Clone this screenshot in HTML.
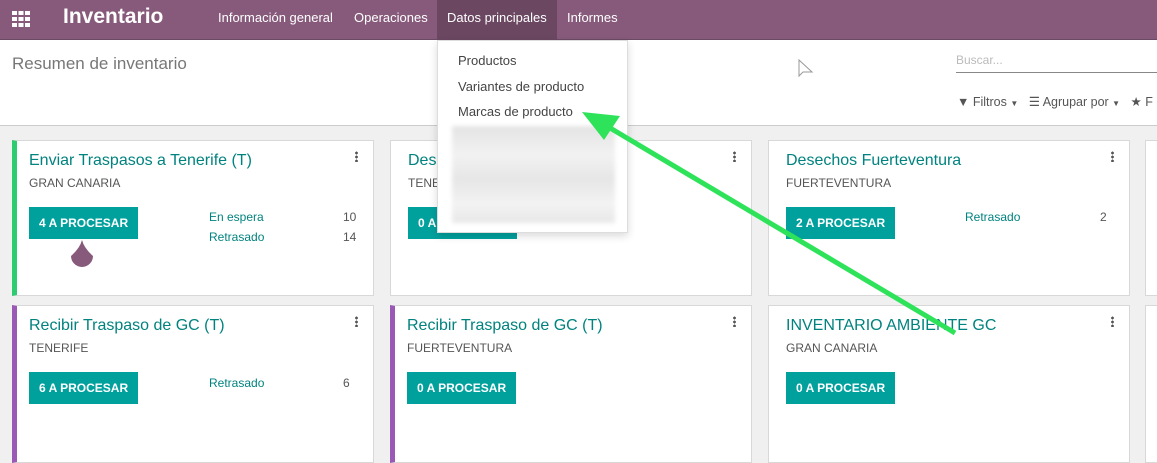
<!DOCTYPE html>
<html><head><meta charset="utf-8"><style>
*{box-sizing:border-box;margin:0;padding:0}
body{width:1157px;height:463px;overflow:hidden;background:#f0f0f0;font-family:"Liberation Sans",sans-serif;position:relative;font-size:13px;color:#4c4c4c}
.nav{position:absolute;left:0;top:0;width:1157px;height:40px;background:#875a7b;color:#fff;border-bottom:1px solid #6b4a63}
.nav span{position:absolute;top:10px;font-size:13px}
.cp{position:absolute;left:0;top:40px;width:1157px;height:86px;background:#fff;border-bottom:1px solid #ccc}
.card{position:absolute;background:#fff;border:1px solid #d8d8d8}
.card .t{position:absolute;left:17px;top:11px;font-size:16px;color:#00837f;white-space:nowrap}
.card .s{position:absolute;left:17px;top:35px;font-size:12px;color:#555}
.card .b{position:absolute;left:17px;top:66px;height:32px;background:#00a09d;color:#fff;font-weight:bold;font-size:12px;padding:9px 10px;white-space:nowrap}
.card .d{position:absolute;right:15px;top:10px;width:3px;height:11px;background:radial-gradient(circle,#555 1.3px,transparent 1.5px) 0 0/3px 4px}
.lbl{position:absolute;font-size:12px;color:#00837f}
.num{position:absolute;font-size:12px;color:#555}
</style></head><body>
<div class="nav">
<svg style="position:absolute;left:12px;top:11px" width="18" height="16" viewBox="0 0 18 16"><g fill="#fff"><rect x="0" y="0" width="5" height="4"/><rect x="6.5" y="0" width="5" height="4"/><rect x="13" y="0" width="5" height="4"/><rect x="0" y="6" width="5" height="4"/><rect x="6.5" y="6" width="5" height="4"/><rect x="13" y="6" width="5" height="4"/><rect x="0" y="12" width="5" height="4"/><rect x="6.5" y="12" width="5" height="4"/><rect x="13" y="12" width="5" height="4"/></g></svg>
<span style="left:63px;top:5px;font-size:21px;font-weight:bold">Inventario</span>
<span style="left:218px">Información general</span>
<span style="left:354px">Operaciones</span>
<div style="position:absolute;left:437px;top:0;width:120px;height:40px;background:#6b4762"></div>
<span style="left:447px">Datos principales</span>
<span style="left:567px">Informes</span>
</div>
<div class="cp">
<div style="position:absolute;left:12px;top:14px;font-size:17px;color:#777">Resumen de inventario</div>
<div style="position:absolute;left:956px;top:13px;font-size:12px;color:#bbb">Buscar...</div>
<div style="position:absolute;left:956px;top:32px;width:201px;height:1px;background:#888"></div>
<div style="position:absolute;left:957px;top:54px;font-size:12.5px;color:#555;white-space:nowrap">▼ Filtros <span style="font-size:8px">▼</span>&nbsp;&nbsp; ☰ Agrupar por <span style="font-size:8px">▼</span>&nbsp;&nbsp; ★ F</div>
<svg style="position:absolute;left:798px;top:19px" width="16" height="20"><path d="M1 1 L1 17 L5 13 L14 13 Z" fill="#fff" stroke="#999"/></svg>
</div>

<div class="card" style="left:12px;top:140px;width:362px;height:156px;border-left:5px solid #2ecc71">
<div class="t" style="left:12px">Enviar Traspasos a Tenerife (T)</div><div class="s" style="left:12px">GRAN CANARIA</div><div class="d"></div>
<div class="b" style="left:12px">4 A PROCESAR</div>
<div class="lbl" style="left:192px;top:69px">En espera</div><div class="num" style="left:326px;top:69px">10</div>
<div class="lbl" style="left:192px;top:89px">Retrasado</div><div class="num" style="left:326px;top:89px">14</div>
<svg style="position:absolute;left:50px;top:98px" width="30" height="34"><path d="M15 1 Q17 9 26 17 A11 11 0 1 1 4 17 Q13 9 15 1Z" fill="#875a7b"/></svg>
</div>
<div class="card" style="left:390px;top:140px;width:362px;height:156px"><div class="t">Desechos Tenerife</div><div class="s">TENERIFE</div><div class="b">0 A PROCESAR</div><div class="d"></div></div>
<div class="card" style="left:768px;top:140px;width:362px;height:156px"><div class="t">Desechos Fuerteventura</div><div class="s">FUERTEVENTURA</div><div class="b">2 A PROCESAR</div><div class="d"></div>
<div class="lbl" style="left:196px;top:69px">Retrasado</div><div class="num" style="left:331px;top:69px">2</div></div>
<div class="card" style="left:1145px;top:140px;width:30px;height:156px"></div>

<div class="card" style="left:12px;top:305px;width:362px;height:158px;border-left:5px solid #9b59b6">
<div class="t" style="left:12px">Recibir Traspaso de GC (T)</div><div class="s" style="left:12px">TENERIFE</div><div class="d"></div>
<div class="b" style="left:12px">6 A PROCESAR</div>
<div class="lbl" style="left:192px;top:70px">Retrasado</div><div class="num" style="left:326px;top:70px">6</div></div>
<div class="card" style="left:390px;top:305px;width:362px;height:158px;border-left:5px solid #9b59b6">
<div class="t" style="left:12px">Recibir Traspaso de GC (T)</div><div class="s" style="left:12px">FUERTEVENTURA</div><div class="d"></div><div class="b" style="left:12px">0 A PROCESAR</div></div>
<div class="card" style="left:768px;top:305px;width:362px;height:158px"><div class="t">INVENTARIO AMBIENTE GC</div><div class="s">GRAN CANARIA</div><div class="b">0 A PROCESAR</div><div class="d"></div></div>
<div class="card" style="left:1145px;top:305px;width:30px;height:158px"></div>

<div style="position:absolute;left:437px;top:40px;width:191px;height:193px;background:#fff;border:1px solid #ddd;box-shadow:0 3px 8px rgba(0,0,0,.15)">
<div style="position:absolute;left:20px;top:12px;color:#444">Productos</div>
<div style="position:absolute;left:20px;top:38px;color:#444">Variantes de producto</div>
<div style="position:absolute;left:20px;top:63px;color:#444">Marcas de producto</div>
<div style="position:absolute;left:14px;top:85px;width:163px;height:97px;background:linear-gradient(180deg,#e4e4e4,#f2f2f2 30%,#e6e6e6 55%,#f3f3f3 80%,#e8e8e8);filter:blur(2px)"></div>
</div>
<svg style="position:absolute;left:0;top:0" width="1157" height="463"><line x1="955" y1="333" x2="600" y2="122" stroke="#2ee35a" stroke-width="5"/><path d="M582 112 L620 116 L604 140 Z" fill="#2ee35a"/></svg>
</body></html>
